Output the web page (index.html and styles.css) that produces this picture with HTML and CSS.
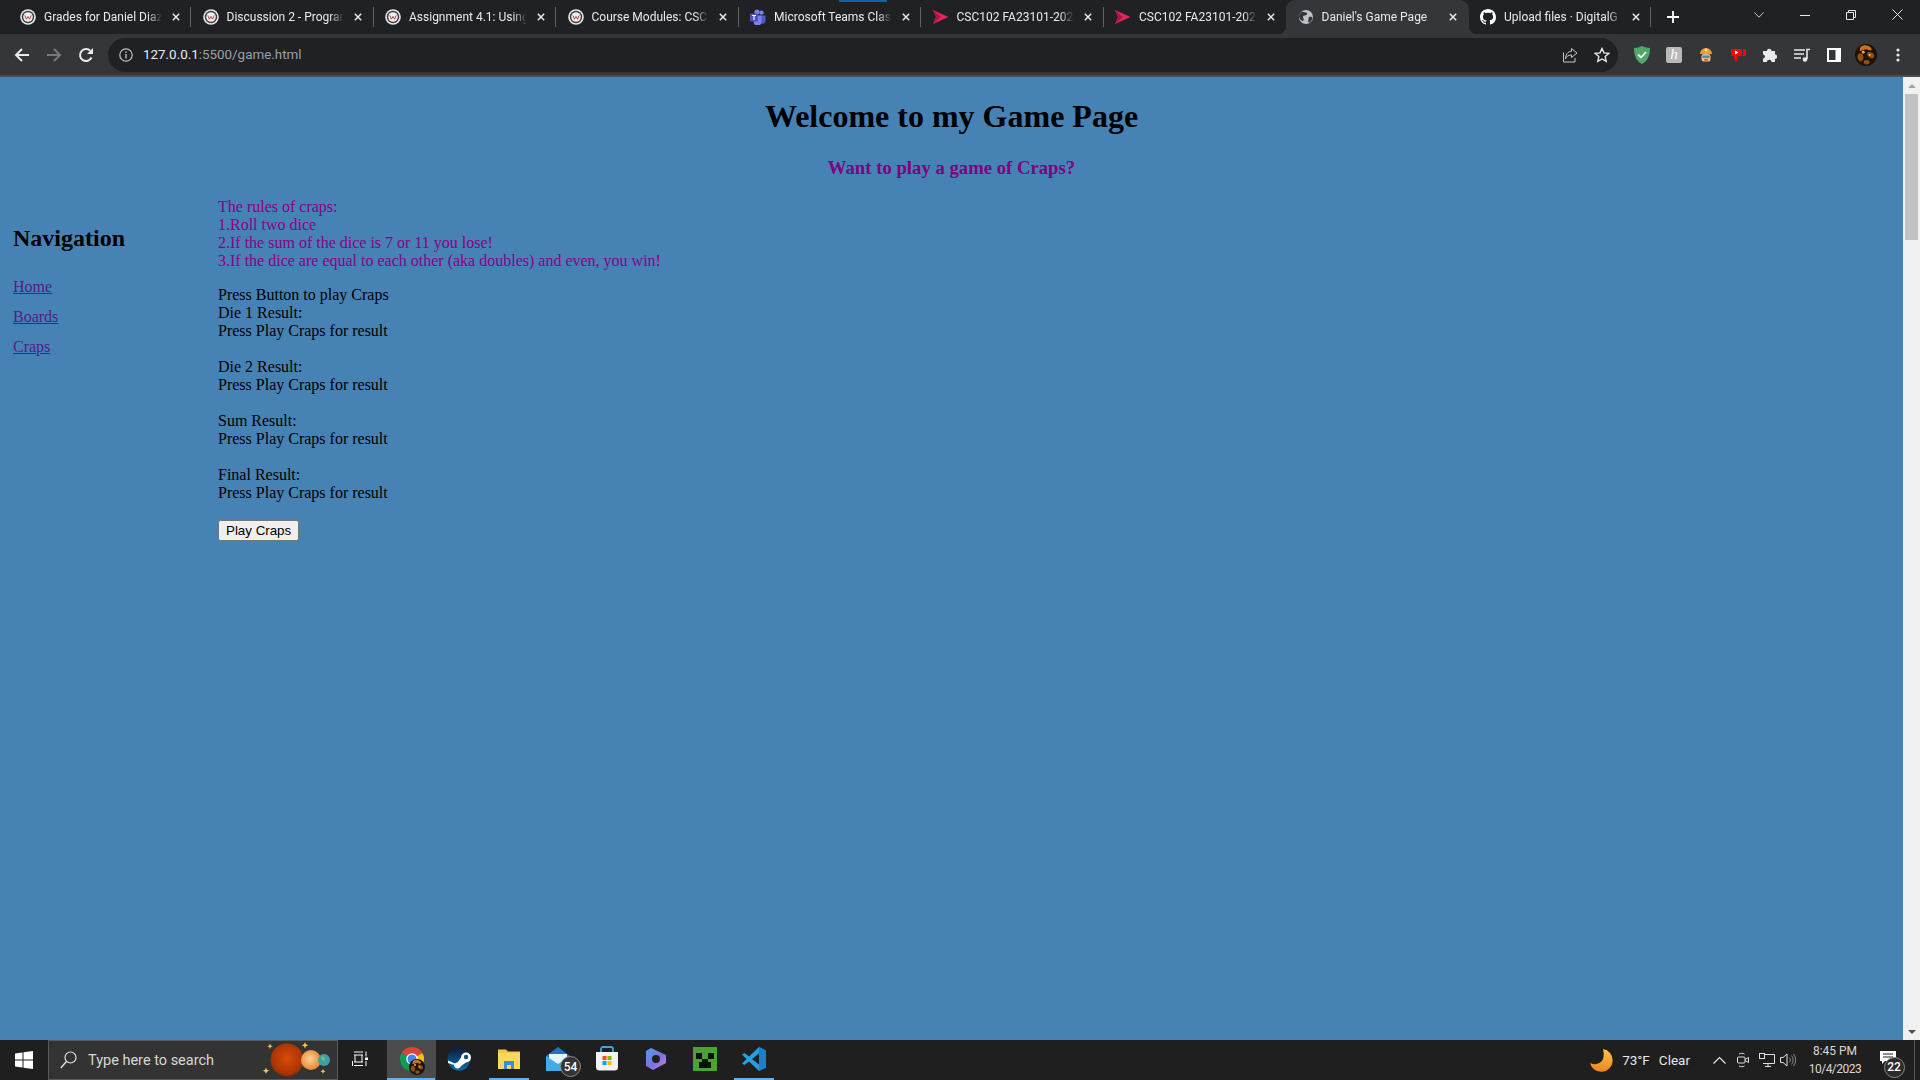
FILE: index.html
```html
<!DOCTYPE html>
<html lang="en">
<head>
<meta charset="utf-8">
<title>Daniel's Game Page</title>
<link rel="stylesheet" href="styles.css">
</head>
<body>
<svg class="sprites" width="0" height="0" aria-hidden="true">
  <defs>
    <radialGradient id="gPlanet" cx="50%" cy="45%" r="55%"><stop offset="0" stop-color="#d94a08"/><stop offset=".85" stop-color="#a83404"/><stop offset="1" stop-color="#7f2c0c"/></radialGradient>
    <radialGradient id="gSun" cx="45%" cy="45%" r="60%"><stop offset="0" stop-color="#ffcf90"/><stop offset="1" stop-color="#e0822e"/></radialGradient>
    <linearGradient id="gMoon" x1="0" y1="0" x2="0" y2="1"><stop offset="0" stop-color="#f9c74a"/><stop offset="1" stop-color="#ee8318"/></linearGradient>
    <linearGradient id="gSteam" x1="0" y1="0" x2="0" y2="1"><stop offset="0" stop-color="#0d1b3a"/><stop offset="1" stop-color="#0a6ea6"/></linearGradient>
    <linearGradient id="gBing" x1="0" y1="0" x2="1" y2="1"><stop offset="0" stop-color="#4aa3e8"/><stop offset=".55" stop-color="#7d6fe0"/><stop offset="1" stop-color="#c78ae0"/></linearGradient>
    <symbol id="i-canvas" viewBox="0 0 16 16">
      <circle cx="8" cy="8" r="7.8" fill="#e8e8e8"/><circle cx="8" cy="8" r="6.2" fill="#3a3a3e"/><circle cx="8" cy="8" r="4.800" fill="#efefef"/>
      <path d="M4.800 6.400 6.400 10.200 8 7.400 9.600 10.200 11.200 6.400" fill="none" stroke="#a8323a" stroke-width=".9"/>
    </symbol>
    <symbol id="i-play" viewBox="0 0 16 16">
      <path d="M0 1 15.500 8 0 15 3 8Z" fill="#e0265a"/><path d="M0 1 8 8 0 15 3 8Z" fill="#a81846"/>
    </symbol>
    <symbol id="i-x" viewBox="0 0 8 8"><path d="M.8.8 7.2 7.2M7.2.8.8 7.2" stroke="#e8eaed" stroke-width="1.500" fill="none"/></symbol>
    <symbol id="i-avatar" viewBox="0 0 24 24">
      <circle cx="12" cy="12" r="12" fill="#1d1208"/>
      <path d="M6 3c4-3 10-2 12 2 1 3-3 2-5 1-3-1-6 3-8 1z" fill="#c9741c"/>
      <path d="M3 12c2-3 5-2 6 1s-1 6-3 6-4-4-3-7zM14 9c3-1 7 1 7 4s-3 3-5 2-4-5-2-6zM10 18c2-1 5-1 6 1s-3 4-5 3-2-3-1-4z" fill="#8f4f14"/>
      <circle cx="9" cy="9" r="1.600" fill="#f0a83c"/><circle cx="16" cy="12" r="1.200" fill="#f0b85a"/><circle cx="12" cy="15" r="1.500" fill="#2a1608"/>
    </symbol>
  </defs>
</svg>

<header class="tabstrip">
  <div class="tabs">
    <div class="tab sep"><svg class="fav"><use href="#i-canvas"/></svg><span class="tab-title">Grades for Daniel Diaz</span><svg class="close"><use href="#i-x"/></svg></div>
    <div class="tab sep"><svg class="fav"><use href="#i-canvas"/></svg><span class="tab-title">Discussion 2 - Program</span><svg class="close"><use href="#i-x"/></svg></div>
    <div class="tab sep"><svg class="fav"><use href="#i-canvas"/></svg><span class="tab-title">Assignment 4.1: Using</span><svg class="close"><use href="#i-x"/></svg></div>
    <div class="tab sep"><svg class="fav"><use href="#i-canvas"/></svg><span class="tab-title">Course Modules: CSC</span><svg class="close"><use href="#i-x"/></svg></div>
    <div class="tab sep">
      <span class="tab-alert"></span>
      <svg class="fav" viewBox="0 0 16 16"><circle cx="11.500" cy="3.600" r="2.200" fill="#7b83eb"/><path d="M9 6.500h6.500v5a3 3 0 0 1-6.500 0z" fill="#5059c9"/><circle cx="7" cy="3" r="2.600" fill="#7b83eb"/><path d="M3.500 6.500h8v6a4 4 0 0 1-8 0z" fill="#7b83eb"/><rect x="0" y="4.500" width="8" height="8" rx="1" fill="#4b53bc"/><path d="M2 6.500h4M4 6.500v4.500" stroke="#fff" stroke-width="1.100" fill="none"/></svg>
      <span class="tab-title">Microsoft Teams Class</span><svg class="close"><use href="#i-x"/></svg>
    </div>
    <div class="tab sep"><svg class="fav"><use href="#i-play"/></svg><span class="tab-title">CSC102 FA23101-2024</span><svg class="close"><use href="#i-x"/></svg></div>
    <div class="tab"><svg class="fav"><use href="#i-play"/></svg><span class="tab-title">CSC102 FA23101-2024</span><svg class="close"><use href="#i-x"/></svg></div>
    <div class="tab tab-active">
      <svg class="fav" viewBox="0 0 16 16"><circle cx="8" cy="8" r="7" fill="#bdc1c6"/><path d="M4 2.500c2 1 4 .5 5 1.500s-1 2.500-2.500 2.500-2 1.500-1 3-.5 3-1.500 2.500-3-3-3-4.500 1.500-4 3-5zM11 8c1.500-.5 3.500 0 3.500 1s-1.500 4-3 4.500-1.500-2-1-3-.5-2 .5-2.500z" fill="#35363a"/></svg>
      <span class="tab-title">Daniel's Game Page</span><svg class="close"><use href="#i-x"/></svg>
    </div>
    <div class="tab sep">
      <svg class="fav" viewBox="0 0 16 16"><path fill="#fff" d="M8 0C3.580 0 0 3.580 0 8c0 3.540 2.290 6.530 5.470 7.590.4.070.55-.17.55-.38 0-.19-.01-.82-.01-1.490-2.010.37-2.530-.49-2.690-.94-.09-.23-.48-.94-.82-1.130-.28-.15-.68-.52-.01-.53.63-.01 1.080.58 1.230.82.72 1.210 1.870.87 2.330.66.07-.52.28-.87.51-1.070-1.780-.2-3.640-.89-3.640-3.950 0-.87.31-1.590.82-2.150-.08-.2-.36-1.020.08-2.120 0 0 .67-.21 2.200.82.64-.18 1.320-.27 2-.27.68 0 1.360.09 2 .27 1.530-1.040 2.200-.82 2.200-.82.44 1.100.16 1.920.08 2.120.51.56.82 1.270.82 2.150 0 3.070-1.870 3.750-3.650 3.950.29.25.54.73.54 1.480 0 1.070-.01 1.930-.01 2.200 0 .21.15.46.55.38A8.013 8.013 0 0 0 16 8c0-4.420-3.580-8-8-8z"/></svg>
      <span class="tab-title">Upload files · DigitalG</span><svg class="close"><use href="#i-x"/></svg>
    </div>
  </div>
  <div class="newtab"><svg width="12" height="12" viewBox="0 0 12 12"><path d="M6 0v12M0 6h12" stroke="#fff" stroke-width="1.800"/></svg></div>
  <div class="window-controls">
    <div class="wc"><svg width="10" height="6" viewBox="0 0 10 6"><path d="M.5.5 5 5.200 9.500.5" stroke="#c8c8c8" fill="none"/></svg></div>
    <div class="wc"><svg width="10" height="10" viewBox="0 0 10 10"><path d="M0 5.500h10" stroke="#e8e8e8"/></svg></div>
    <div class="wc"><svg width="10" height="10" viewBox="0 0 10 10"><path d="M.5 2.500h7v7h-7zM2.500 2.500v-2h7v7h-2" stroke="#e8e8e8" fill="none"/></svg></div>
    <div class="wc"><svg width="11" height="11" viewBox="0 0 11 11"><path d="M.5.5 10.500 10.500M10.500.5.500 10.500" stroke="#e8e8e8" fill="none"/></svg></div>
  </div>
</header>

<nav class="toolbar">
  <div class="tb-btn"><svg width="16" height="16" viewBox="0 0 16 16"><path d="M15 8H2M8 2 2 8l6 6" stroke="#e8eaed" stroke-width="2" fill="none"/></svg></div>
  <div class="tb-btn"><svg width="16" height="16" viewBox="0 0 16 16"><path d="M1 8h13M8 2l6 6-6 6" stroke="#75787c" stroke-width="2" fill="none"/></svg></div>
  <div class="tb-btn"><svg width="16" height="16" viewBox="0 0 16 16"><path d="M13.500 10.500A6 6 0 1 1 12.300 3.800" stroke="#e8eaed" stroke-width="2" fill="none"/><path d="M15 1v6H9z" fill="#e8eaed"/></svg></div>
  <div class="omnibox">
    <svg class="omni-info" width="14" height="14" viewBox="0 0 14 14"><circle cx="7" cy="7" r="6.200" stroke="#bdc1c6" stroke-width="1.200" fill="none"/><path d="M7 6v4.500M7 3.500v1.400" stroke="#bdc1c6" stroke-width="1.400"/></svg>
    <div class="url"><span class="url-host">127.0.0.1</span>:5500/game.html</div>
    <svg width="16" height="16" viewBox="0 0 16 16"><path d="M1.500 5.500v9.500h11.500v-4M9.500 1.500l5.500 4.500-5.500 4.500V8C6 8 4.500 9.500 3.500 12 3.500 8 5.500 4.500 9.500 4.200z" stroke="#c4c7c5" fill="none"/></svg>
    <svg class="omni-star" width="16" height="16" viewBox="0 0 16 16"><path d="m8 1.500 2 4.400 4.800.5-3.600 3.200 1 4.700L8 12l-4.200 2.300 1-4.700L1.200 6.400 6 5.900z" stroke="#e8eaed" stroke-width="1.400" fill="none"/></svg>
  </div>
  <div class="tb-btn"><svg width="16" height="18" viewBox="0 0 16 18"><path d="M8 0c2.500 1.300 5 1.800 8 2 0 7-2 13-8 16C2 15 0 9 0 2c3-.2 5.500-.7 8-2z" fill="#4fa86a"/><path d="m4 8.500 3 3 5-5.500" stroke="#fff" stroke-width="1.800" fill="none"/></svg></div>
  <div class="tb-btn"><span class="ext-k">h</span></div>
  <div class="tb-btn"><svg width="14" height="16" viewBox="0 0 14 16"><path d="M1 7a6 6 0 0 1 12 0z" fill="#e8a02c"/><circle cx="7" cy="3" r="1.400" fill="#ffe08a"/><rect x="2.500" y="7" width="9" height="7.500" rx="2.500" fill="#eebd8e"/><rect x="3.500" y="8.500" width="7" height="2.500" fill="#3f8fb8"/><rect x="5" y="12" width="4" height="1.500" fill="#a5603a"/></svg></div>
  <div class="tb-btn"><svg width="16" height="16" viewBox="0 0 16 16"><path d="M1 2h11v7H8l-1 5.500c-2 0-3-2-3-5.500H1z" fill="#f00"/><rect x="13" y="2" width="3" height="7" fill="#f00"/><path d="m5 3.500 3.500 2L5 7.500z" fill="#fff"/></svg></div>
  <div class="tb-btn"><svg width="14" height="14" viewBox="0 0 14 14"><path d="M0 3h4C4 0 8.500 0 8.500 3H12v3.500c3 0 3 4.500 0 4.500v3H8.500c0-3-4.500-3-4.500 0H0v-3.500c2.500 0 2.500-4 0-4z" fill="#e8eaed"/></svg></div>
  <div class="tb-btn"><svg width="16" height="14" viewBox="0 0 16 14"><path d="M0 2h11M0 6h10M0 10h7" stroke="#e8eaed" stroke-width="1.600"/><path d="M13 11V1.500h3" stroke="#e8eaed" stroke-width="1.600" fill="none"/><circle cx="11" cy="11.500" r="2.300" fill="#e8eaed"/></svg></div>
  <div class="tb-btn"><svg width="14" height="14" viewBox="0 0 14 14"><rect width="14" height="14" fill="#fff"/><rect x="2" y="2" width="6.500" height="10" fill="#35363a"/></svg></div>
  <div class="tb-btn"><svg width="22" height="22"><use href="#i-avatar"/></svg></div>
  <div class="tb-btn"><svg width="4" height="14" viewBox="0 0 4 14"><circle cx="2" cy="2" r="1.600" fill="#e8eaed"/><circle cx="2" cy="7" r="1.600" fill="#e8eaed"/><circle cx="2" cy="12" r="1.600" fill="#e8eaed"/></svg></div>
</nav>

<div class="viewport">
  <main class="page">
    <h1 class="page-title">Welcome to my Game Page</h1>
    <h3 class="page-sub">Want to play a game of Craps?</h3>
    <div class="columns">
      <aside class="side">
        <h2 class="side-title">Navigation</h2>
        <p class="side-link"><a href="#home">Home</a></p>
        <p class="side-link"><a href="#boards">Boards</a></p>
        <p class="side-link"><a href="#craps">Craps</a></p>
      </aside>
      <section class="game">
        <p class="rules">The rules of craps:<br>1.Roll two dice<br>2.If the sum of the dice is 7 or 11 you lose!<br>3.If the dice are equal to each other (aka doubles) and even, you win!</p>
        <p class="results">Press Button to play Craps<br>Die 1 Result:<br>Press Play Craps for result<br><br>Die 2 Result:<br>Press Play Craps for result<br><br>Sum Result:<br>Press Play Craps for result<br><br>Final Result:<br>Press Play Craps for result</p>
        <button class="play" type="button">Play Craps</button>
      </section>
    </div>
  </main>
  <div class="scrollbar">
    <div class="sb-btn"><span class="arrow-up"></span></div>
    <div class="sb-track"><div class="sb-thumb"></div></div>
    <div class="sb-btn"><span class="arrow-down"></span></div>
  </div>
</div>

<footer class="taskbar">
  <div class="start"><svg width="18" height="18" viewBox="0 0 18 18"><path d="M0 2.500 7.500 1.400V8.500H0zM8.500 1.300 18 0V8.500H8.500zM0 9.500h7.500v7.100L0 15.500zM8.500 9.500H18V18L8.500 16.700z" fill="#fff"/></svg></div>
  <div class="search">
    <svg width="17" height="18" viewBox="0 0 17 18"><circle cx="10.500" cy="6.500" r="5.500" stroke="#e0e0e0" fill="none" stroke-width="1.200"/><path d="M6.500 10.500.8 17" stroke="#e0e0e0" stroke-width="1.400"/></svg>
    <span class="search-text">Type here to search</span>
    <svg class="search-art" width="84" height="36" viewBox="0 0 84 36">
      <circle cx="38" cy="18" r="16.500" fill="url(#gPlanet)"/>
      <circle cx="62" cy="18" r="10" fill="url(#gSun)"/>
      <circle cx="75" cy="18" r="6" fill="#39a0a8"/><path d="M72 15c2-1 4 0 4 2s-2 2-3 1z" fill="#6fc06a"/>
      <path d="M21 1.500l.8 2 2 .8-2 .8-.8 2-.8-2-2-.8 2-.8zM56 0l1 2.200 2.200 1-2.200 1-1 2.200-1-2.200-2.200-1 2.200-1zM17 25.500l1 2.200 2.200 1-2.200 1-1 2.200-1-2.200-2.200-1 2.200-1zM74 27l.8 1.600 1.600.8-1.600.8-.8 1.600-.8-1.600-1.600-.8 1.600-.8z" fill="#ecc25a"/>
    </svg>
  </div>
  <div class="tile tile-view"><svg width="16" height="16" viewBox="0 0 16 16"><path d="M2 1h9M2 4h9M2 11h9M2 14.500h9M3 4v7M10 4v7M.5 15V10M14 .5v5M14 10v5" stroke="#fff" fill="none"/><rect x="13" y="6.500" width="3" height="2.500" fill="#fff"/></svg></div>
  <div class="tile tile-active tile-open">
    <svg class="chrome" width="24" height="24" viewBox="0 0 24 24"><path d="M12 12 1.600 6A12 12 0 0 1 22.400 6z" fill="#db4437"/><path d="M12 12 22.400 6A12 12 0 0 1 12 24z" fill="#f4c20d"/><path d="M12 12V24A12 12 0 0 1 1.600 6z" fill="#0f9d58"/><circle cx="12" cy="12" r="5.800" fill="#fff"/><circle cx="12" cy="12" r="4.500" fill="#4285f4"/></svg>
    <svg class="chrome-avatar" width="16" height="16"><use href="#i-avatar"/></svg>
  </div>
  <div class="tile tile-steam"><svg width="24" height="24" viewBox="0 0 24 24"><circle cx="12" cy="12" r="11.500" fill="url(#gSteam)"/><path d="M1 13.500 8 16.500a3.500 3.500 0 0 1 2.500-1l3.500-5a5 5 0 1 1 5 5l-5 3.500A3.600 3.600 0 0 1 7 18L1 16z" fill="#fff"/><circle cx="19" cy="10" r="2.200" fill="#1a4a78"/></svg></div>
  <div class="tile tile-open"><svg width="22" height="22" viewBox="0 0 22 22"><path d="M0 1.500h8l2 2h12V21H0z" fill="#f6c545"/><path d="M0 5h22v16H0z" fill="#fbd75c"/><path d="M6 21v-8h10v8h-3v-4H9v4z" fill="#3a8fd8"/></svg></div>
  <div class="tile">
    <svg width="24" height="24" viewBox="0 0 24 24"><path d="M0 9 12 0l12 9v14H0z" fill="#1e73c4"/><path d="M3 7h18v7l-9 5-9-5z" fill="#e8f4fc"/><path d="M0 9l12 8 12-8v15H0z" fill="#42ace8"/></svg>
    <span class="badge badge-mail">54</span>
  </div>
  <div class="tile"><svg width="24" height="25" viewBox="0 0 24 25"><path d="M6 8V3a2 2 0 0 1 2-2h8a2 2 0 0 1 2 2v5" stroke="#38a8e8" stroke-width="1.800" fill="none"/><path d="M1 6h22v15a3.500 3.500 0 0 1-3.500 3.500h-15A3.500 3.500 0 0 1 1 21z" fill="#f2f2f2"/><rect x="7.500" y="10" width="4" height="4" fill="#f25022"/><rect x="12.500" y="10" width="4" height="4" fill="#7fba00"/><rect x="7.500" y="15" width="4" height="4" fill="#00a4ef"/><rect x="12.500" y="15" width="4" height="4" fill="#ffb900"/></svg></div>
  <div class="tile"><svg width="20" height="24" viewBox="0 0 20 24"><path d="M5 1 20 8v8L7 23 0 19V4zM10 8a4 4 0 1 0 0 8 4 4 0 0 0 0-8z" fill="url(#gBing)" fill-rule="evenodd"/></svg></div>
  <div class="tile"><svg width="24" height="24" viewBox="0 0 8 8" shape-rendering="crispEdges"><rect width="8" height="8" fill="#4aa332"/><path d="M1 2h2v2H1zM5 2h2v2H5zM3 4h2v3H3zM2 5h1v2H2zM5 5h1v2H5z" fill="#0c0c0c"/></svg></div>
  <div class="tile tile-open"><svg width="24" height="24" viewBox="0 0 24 24"><path d="M17 0 24 3.500v17L17 24 7 14.500 2.500 18 0 16.500 4.500 12 0 7.500 2.500 6 7 9.500z" fill="#2a9ce0"/><path d="M17 6.500v11L10 12z" fill="#1f1f1f"/><path d="M17 0 24 3.500v17L17 24z" fill="#1a7fc8"/></svg></div>

  <div class="tray">
    <svg class="moon" width="24" height="24" viewBox="0 0 24 24"><path d="M14 1A11.500 11.500 0 1 1 1 15c5 2.500 11 1 13-4 1.200-3.500.8-7 0-10z" fill="url(#gMoon)"/></svg>
    <span class="weather">73°F</span>
    <span class="weather weather-word">Clear</span>
    <svg class="tray-chev" width="13" height="8" viewBox="0 0 13 8"><path d="M.5 7.500 6.500 1.500l6 6" stroke="#e8e8e8" stroke-width="1.200" fill="none"/></svg>
    <svg class="tray-cam" width="12" height="16" viewBox="0 0 12 16"><rect x=".5" y="5" width="7.500" height="6" rx="1" stroke="#e0e0e0" fill="none"/><path d="M8 7.500 11.500 5.500v5L8 8.500M2 2c1.500-1 4-1 5.500 0M2 14c1.500 1 4 1 5.500 0" stroke="#e0e0e0" fill="none"/></svg>
    <svg class="tray-net" width="16" height="14" viewBox="0 0 16 14"><path d="M4 1.500h11.500v9H4M9 10.500v3M6 13.500h6" stroke="#e0e0e0" fill="none"/><rect x=".5" y=".5" width="5" height="5" fill="#1f1f1f" stroke="#e0e0e0"/></svg>
    <svg class="tray-vol" width="16" height="14" viewBox="0 0 16 14"><path d="M.5 4.500h2.500L7 1v12L3 9.500H.5z" stroke="#e0e0e0" fill="none"/><path d="M9.500 4.500a4 4 0 0 1 0 5M11.500 2.500a7 7 0 0 1 0 9M13.500 1a10 10 0 0 1 0 12" stroke="#8a8a8a" fill="none"/></svg>
    <div class="clock"><span>8:45 PM</span><span class="clock-date">10/4/2023</span></div>
    <div class="notify">
      <svg width="16" height="13" viewBox="0 0 16 13"><path d="M0 0h16v10H5l-3 3v-3H0z" fill="#fff"/><path d="M3 3h10M3 6h10" stroke="#1f1f1f"/></svg>
      <span class="badge badge-notify">22</span>
    </div>
    <div class="show-desktop"></div>
  </div>
</footer>
</body>
</html>
```
FILE: styles.css
```css
* { box-sizing: border-box; }
html, body { height: 100%; }
body {
  margin: 0;
  display: flex;
  flex-direction: column;
  height: 100vh;
  overflow: hidden;
  font-family: "Liberation Serif", serif;
  background: #4682b4;
}
.sprites { position: absolute; }

/* tab strip */
.tabstrip {
  flex: 0 0 34px;
  display: flex;
  align-items: stretch;
  background: #202124;
  font-family: Roboto, sans-serif;
  color: #e8eaed;
}
.tabs { display: flex; padding-left: 8.5px; }
.tab {
  position: relative;
  flex: 0 0 182.5px;
  width: 182.5px;
  display: flex;
  align-items: center;
  padding: 0 11.5px;
  font-size: 12px;
}
.tab.sep::after {
  content: "";
  position: absolute;
  right: 0;
  top: 7px;
  width: 1px;
  height: 20px;
  background: #5f6368;
}
.tab-active { background: #35363a; border-radius: 9px 9px 0 0; }
.tab-active::before, .tab-active::after {
  content: "";
  position: absolute;
  bottom: 0;
  width: 8px;
  height: 8px;
}
.tab-active::before { left: -8px; background: radial-gradient(circle at 0 0, transparent 8px, #35363a 8.5px); }
.tab-active::after { right: -8px; background: radial-gradient(circle at 100% 0, transparent 8px, #35363a 8.5px); }
.tab-alert {
  position: absolute;
  left: 100px;
  top: 0;
  width: 48px;
  height: 2px;
  background: #0a63b0;
}
.fav { flex: 0 0 16px; width: 16px; height: 16px; margin-right: 8px; }
.tab-title {
  flex: 1;
  min-width: 0;
  margin-right: 10px;
  white-space: nowrap;
  overflow: hidden;
  -webkit-mask-image: linear-gradient(to right, #000 88%, transparent 100%);
  mask-image: linear-gradient(to right, #000 88%, transparent 100%);
}
.close { flex: 0 0 8px; width: 8px; height: 8px; }
.newtab { flex: 0 0 44px; display: flex; align-items: center; justify-content: center; }
.window-controls { margin-left: auto; display: flex; }
.wc { width: 46px; display: flex; align-items: center; justify-content: center; padding-bottom: 5px; }

/* toolbar */
.toolbar {
  flex: 0 0 43px;
  display: flex;
  align-items: center;
  padding: 0 6px;
  background: #35363a;
  border-bottom: 2px solid #4a4c50;
  font-family: Roboto, sans-serif;
}
.tb-btn { flex: 0 0 32px; height: 32px; display: flex; align-items: center; justify-content: center; }
.ext-k {
  width: 16px;
  height: 16px;
  background: #b9b9b9;
  border-radius: 2px;
  color: #fff;
  font: italic 15px/15px "Liberation Serif", serif;
  text-align: center;
}
.omnibox {
  flex: 1;
  height: 34px;
  margin: 0 8px 0 6px;
  padding: 0 8px 0 11px;
  display: flex;
  align-items: center;
  background: #202124;
  border-radius: 17px;
}
.omni-info { margin-right: 10px; }
.omni-star { margin-left: 16px; }
.url { flex: 1; font-size: 13.4px; color: #9aa0a6; }
.url-host { color: #e8eaed; }

/* page */
.viewport { flex: 1; min-height: 0; display: flex; }
.page { flex: 1; min-width: 0; background: #4682b4; color: #000; font-size: 16px; padding-top: 21.44px; }
.page-title { margin: 0 0 21.44px; font-size: 32px; text-align: center; }
.page-sub { margin: 0 0 18.72px; font-size: 18.72px; text-align: center; color: #800080; }
.columns { display: flex; }
.side { flex: 0 0 218px; padding: 27px 0 0 13px; }
.side-title { margin: 0 0 26px; font-size: 24px; }
.side-link { margin: 0 0 12px; }
.side-link a { color: #551a8b; }
.rules { margin: 0 0 16px; color: #8b008b; }
.results { margin: 0 0 18px; }
.play { display: block; font-family: "Liberation Sans", sans-serif; font-size: 13.33px; }

/* scrollbar */
.scrollbar { flex: 0 0 17px; display: flex; flex-direction: column; background: #f1f1f1; }
.sb-btn { flex: 0 0 17px; display: flex; align-items: center; justify-content: center; }
.sb-track { flex: 1; padding: 0 2px; }
.sb-thumb { height: 146px; background: #c1c1c1; }
.arrow-up, .arrow-down { width: 0; height: 0; border-left: 4px solid transparent; border-right: 4px solid transparent; }
.arrow-up { border-bottom: 4px solid #a3a3a3; }
.arrow-down { border-top: 4px solid #505050; }

/* taskbar */
.taskbar {
  flex: 0 0 40px;
  display: flex;
  align-items: stretch;
  background: #1f1f1f;
  color: #f0f0f0;
  font-family: Roboto, sans-serif;
}
.start { flex: 0 0 48px; display: flex; align-items: center; justify-content: center; }
.search {
  flex: 0 0 290px;
  display: flex;
  align-items: center;
  padding-left: 11px;
  background: #333;
  border: 1px solid #5a5a5a;
}
.search-text { margin-left: 11px; font-size: 14.5px; color: #d8d8d8; flex: 1; }
.search-art { margin-right: 4px; }
.tile { position: relative; flex: 0 0 49px; display: flex; align-items: center; justify-content: center; padding: 0 2px 3px 0; }
.tile-view { padding-right: 6px; }
.tile-steam { padding-right: 4px; }
.tile-active { background: #4b4b4b; padding-right: 0; }
.tile-open::after { content: ""; position: absolute; left: 4px; right: 5px; bottom: 0; height: 2px; background: #63b0ee; }
.tile-active::after { left: 0; right: 1px; }
.chrome-avatar { position: absolute; left: 22px; top: 19px; }
.badge {
  position: absolute;
  display: flex;
  align-items: center;
  justify-content: center;
  border-radius: 50%;
  background: #333;
  border: 1px solid #8a8a8a;
  color: #fff;
  font-weight: 500;
}
.badge-mail { left: 26px; top: 16px; width: 21px; height: 21px; font-size: 12px; }
.tray { margin-left: auto; display: flex; align-items: center; }
.moon { margin-right: 9px; }
.weather { font-size: 13.5px; color: #e8e8e8; margin-right: 9px; }
.weather-word { margin-right: 23px; }
.tray-chev { margin-right: 11px; }
.tray-cam { margin-right: 10px; }
.tray-net { margin-right: 5px; }
.tray-vol { margin-right: 7px; }
.clock {
  width: 64px;
  display: flex;
  flex-direction: column;
  align-items: center;
  gap: 4px;
  font-size: 12px;
  line-height: 14px;
  color: #d8d8d8;
}
.clock-date { letter-spacing: -.5px; }
.notify { position: relative; width: 42px; display: flex; justify-content: center; align-items: center; padding-bottom: 6px; align-self: stretch; }
.badge-notify { left: 16.5px; top: 16.5px; width: 21px; height: 21px; font-size: 12px; background: #2b2b2b; }
.show-desktop { width: 11px; align-self: stretch; border-left: 0; border-right: 5px solid #1f1f1f; box-shadow: inset -1px 0 0 #555; }
```
